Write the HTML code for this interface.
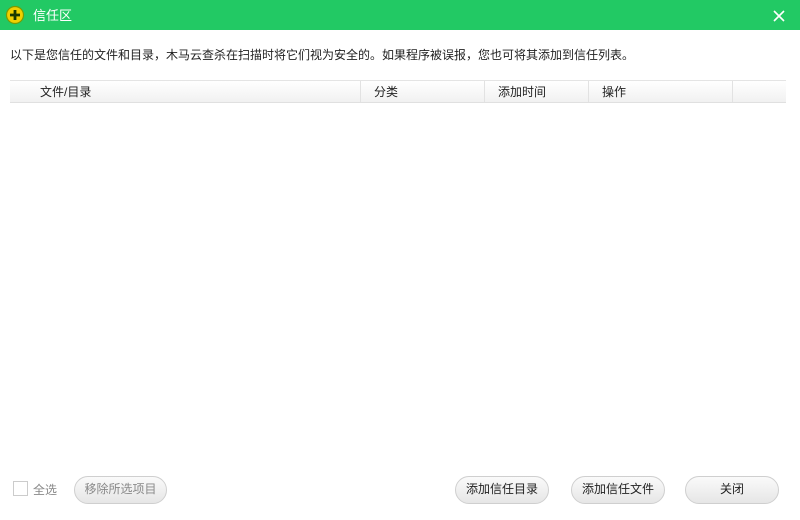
<!DOCTYPE html>
<html><head><meta charset="utf-8"><style>
*{margin:0;padding:0;box-sizing:border-box}
body{width:800px;height:520px;background:#fff;font-family:"Liberation Sans","Noto Sans CJK SC",sans-serif;font-size:12px;color:#222;position:relative;overflow:hidden}
.title{position:absolute;left:0;top:0;width:800px;height:30px;background:#22c964}
.title .t{position:absolute;left:33px;top:5px;color:#fff;font-size:13px}
.desc{position:absolute;left:10px;top:46px;font-size:12px}
.hdr{position:absolute;left:10px;top:80px;width:776px;height:23px;background:linear-gradient(#fff,#f1f1f1);border-top:1px solid #e4e4e4;border-bottom:1px solid #e0e0e0}
.hdr span{position:absolute;top:2px}
.hdr i{position:absolute;top:0;width:1px;height:21px;background:#e2e2e2}
.btn{position:absolute;top:476px;height:28px;border:1px solid #cfcfcf;border-radius:14px;background:linear-gradient(#fafafa,#e6e6e6);text-align:center;line-height:25px;font-size:12px}
</style></head><body>
<div class="title">
<svg style="position:absolute;left:5px;top:5px" width="20" height="20" viewBox="0 0 20 20"><circle cx="10" cy="10" r="8.5" fill="#f0d000" stroke="#7a9a00" stroke-width="1.2"/><path d="M10 5v10M5 10h10" stroke="#1a3a00" stroke-width="2.8"/></svg>
<span class="t">信任区</span>
<svg style="position:absolute;left:773px;top:10px" width="12" height="12" viewBox="0 0 12 12"><path d="M1 1L11 11M11 1L1 11" stroke="#fff" stroke-width="1.6"/></svg>
</div>
<div class="desc">以下是您信任的文件和目录，木马云查杀在扫描时将它们视为安全的。如果程序被误报，您也可将其添加到信任列表。</div>
<div class="hdr">
<span style="left:30px">文件/目录</span><i style="left:350px"></i>
<span style="left:364px">分类</span><i style="left:474px"></i>
<span style="left:488px">添加时间</span><i style="left:578px"></i>
<span style="left:592px">操作</span><i style="left:722px"></i>
</div>
<div style="position:absolute;left:13px;top:481px;width:15px;height:15px;border:1px solid #ccc"></div>
<span style="position:absolute;left:33px;top:481px;color:#888">全选</span>
<div class="btn" style="left:74px;width:93px;color:#888">移除所选项目</div>
<div class="btn" style="left:455px;width:94px">添加信任目录</div>
<div class="btn" style="left:571px;width:94px">添加信任文件</div>
<div class="btn" style="left:685px;width:94px">关闭</div>
</body></html>
